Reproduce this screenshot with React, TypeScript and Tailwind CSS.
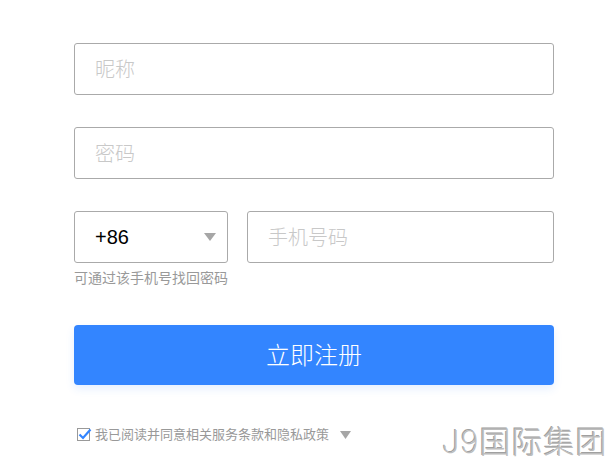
import React, { useState } from 'react';

const FONT = "font-['Liberation_Sans','Noto_Sans_CJK_SC',sans-serif]";

const Field = ({ placeholder, type = 'text' }: { placeholder: string; type?: string }) => (
  <input
    type={type}
    placeholder={placeholder}
    className="h-[52px] w-full rounded-[3px] border border-[#aaa] px-5 pt-[3px] text-[20px] font-light text-[#333] placeholder:text-[#c8c8c8] outline-none"
  />
);

export default function App() {
  const [agreed, setAgreed] = useState(true);

  return (
    <div className={`relative h-[467px] w-[614px] overflow-hidden bg-white ${FONT}`}>
      <form className="flex w-[480px] flex-col pl-[74px] pt-[43px] box-content" onSubmit={e => e.preventDefault()}>
        <Field placeholder="昵称" />
        <div className="mt-8">
          <Field placeholder="密码" type="password" />
        </div>

        {/* Country code + phone */}
        <div className="mt-8 flex gap-[19px]">
          <div className="flex h-[52px] w-[154px] shrink-0 items-center justify-between rounded-[3px] border border-[#aaa] pl-5 pr-[11px]">
            <span className="text-[20px] text-black">+86</span>
            <svg width="12" height="8" viewBox="0 0 12 8">
              <path d="M0 0h12L6 8z" fill="#a6a6a6" />
            </svg>
          </div>
          <Field placeholder="手机号码" />
        </div>
        <p className="mt-[6px] text-[14px] leading-[18px] text-[#999]">可通过该手机号找回密码</p>

        <button
          type="submit"
          className="mt-[38px] h-[60px] w-full rounded-[4px] bg-[#3385ff] pt-[2px] text-[24px] font-light text-white shadow-[0_4px_8px_rgba(51,133,255,0.12)]"
        >
          立即注册
        </button>

        {/* Agreement */}
        <label className="mt-[40px] flex items-center gap-[5px] text-[13px] text-[#999]">
          <span
            onClick={() => setAgreed(!agreed)}
            className="relative ml-[3px] flex h-[13px] w-[13px] items-center justify-center border border-[#999] bg-white"
          >
            {agreed && (
              <svg width="14" height="12" viewBox="0 0 14 12" className="absolute left-[0px] top-[-1px]">
                <path d="M1.5 6.5 L5 10 L12.5 1.5" stroke="#3385ff" strokeWidth="2.2" fill="none" />
              </svg>
            )}
          </span>
          <span>我已阅读并同意相关服务条款和隐私政策</span>
          <svg width="11" height="8" viewBox="0 0 11 8" className="ml-[6px]">
            <path d="M0 0h11L5.5 8z" fill="#a6a6a6" />
          </svg>
        </label>
      </form>

      {/* watermark */}
      <div className="absolute left-[442px] top-[419px] font-['Inter','Noto_Sans_CJK_SC',sans-serif] text-[31px] font-extralight tracking-[1px] text-[#bdbdbd] [text-shadow:1px_1px_0_#fff,-1px_-1px_0_#a0a0a0]">
        J9国际集团
      </div>
    </div>
  );
}
